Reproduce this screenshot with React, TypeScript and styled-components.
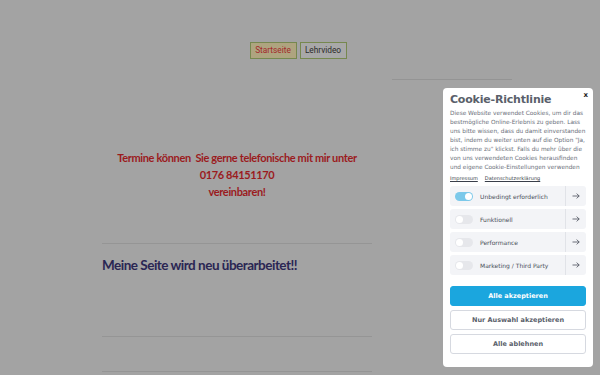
import styled, { createGlobalStyle } from 'styled-components';

const GlobalStyle = createGlobalStyle`
    html, body {
        margin: 0;
        padding: 0;
        background: #a3a3a3;
        font-family: 'DejaVu Sans', sans-serif;
    }
`;

const Page = styled.div`
    width: 600px;
    height: 375px;
    overflow: hidden;
    position: relative;
`;

const Nav = styled.nav`
    display: flex;
    justify-content: center;
    gap: 3px;
    padding: 42px 4px 0 0;
`;

const NavButton = styled.a<{ $active?: boolean }>`
    display: block;
    box-sizing: border-box;
    width: 47px;
    height: 17px;
    text-align: center;
    border: 1.5px solid #76884f;
    background: ${(p) => (p.$active ? '#aea47f' : '#a8a8a8')};
    color: ${(p) => (p.$active ? '#a3282a' : '#2a2a2a')};
    font-family: Roboto, sans-serif;
    font-size: 8.3px;
    line-height: 14px;
    text-decoration: none;
`;

const Columns = styled.div`
    display: flex;
    padding-left: 102px;
    gap: 20px;
`;

const Main = styled.main`
    width: 270px;
`;

const Sidebar = styled.aside`
    width: 120px;
    margin-top: 20px;
    border-top: 1px solid #949494;
    height: 0;
`;

const Notice = styled.p`
    margin: 90px 0 0;
    text-align: center;
    color: #9b1b1e;
    font-family: Lato, sans-serif;
    font-weight: 700;
    font-size: 11px;
    line-height: 17px;
    letter-spacing: -0.35px;
`;

const Rule = styled.hr<{ $gap: number }>`
    margin: ${(p) => p.$gap}px 0 0;
    border: 0;
    border-top: 1px solid #959595;
`;

const Heading = styled.h2`
    margin: 12px 0 0;
    color: #2a2653;
    font-family: Lato, sans-serif;
    font-weight: 700;
    font-size: 13.5px;
    line-height: 18px;
    letter-spacing: -0.5px;
`;

const Modal = styled.div`
    position: absolute;
    top: 88px;
    left: 443px;
    width: 150px;
    height: 279px;
    box-sizing: border-box;
    background: #fff;
    border-radius: 4px;
    padding: 5px 7px 0;
    color: #5c6270;
`;

const Close = styled.span`
    position: absolute;
    top: 3px;
    right: 5px;
    font-size: 7px;
    font-weight: 700;
    color: #222;
`;

const Title = styled.h3`
    margin: 0;
    font-size: 11px;
    line-height: 14px;
    font-weight: 700;
    color: #5a5f6b;
    letter-spacing: -0.2px;
`;

const Body = styled.p`
    margin: 2px 0 0;
    font-size: 5.8px;
    line-height: 9px;
    color: #6a6f7a;
    white-space: nowrap;
`;

const Links = styled.div`
    display: flex;
    gap: 7px;
    margin-top: 2px;
    font-size: 5px;
    line-height: 8px;
    a {
        color: #3a3f4a;
        text-decoration: underline;
    }
`;

const Options = styled.div`
    display: flex;
    flex-direction: column;
    gap: 3px;
    margin-top: 4px;
`;

const Option = styled.div`
    display: flex;
    align-items: center;
    height: 20px;
    background: #f3f4f7;
    border-radius: 3px;
`;

const Toggle = styled.span<{ $on?: boolean }>`
    position: relative;
    width: 18px;
    height: 9px;
    margin: 0 7px 0 5px;
    border-radius: 5px;
    background: ${(p) => (p.$on ? '#7cc9ea' : '#e6e7eb')};
    &::after {
        content: '';
        position: absolute;
        top: 1px;
        ${(p) => (p.$on ? 'right: 1px;' : 'left: 1px;')}
        width: 7px;
        height: 7px;
        border-radius: 50%;
        background: #fff;
    }
`;

const OptionLabel = styled.span`
    flex: 1;
    font-size: 6px;
    color: #4a4f5a;
`;

const Arrow = styled.span`
    display: flex;
    align-items: center;
    justify-content: center;
    width: 20px;
    height: 100%;
    border-left: 1px solid #e1e3e8;
    color: #4a4f5a;
`;

const Actions = styled.div`
    display: flex;
    flex-direction: column;
    gap: 4px;
    margin-top: 11px;
`;

const Button = styled.button<{ $primary?: boolean }>`
    height: 20px;
    border-radius: 3px;
    border: 1px solid ${(p) => (p.$primary ? '#1ba6de' : '#d6d9e0')};
    background: ${(p) => (p.$primary ? '#1ba6de' : '#fff')};
    color: ${(p) => (p.$primary ? '#fff' : '#5a5f6b')};
    font-family: 'DejaVu Sans', sans-serif;
    font-weight: 700;
    font-size: 6.5px;
    padding: 0;
`;

const options = [
    { label: 'Unbedingt erforderlich', on: true },
    { label: 'Funktionell', on: false },
    { label: 'Performance', on: false },
    { label: 'Marketing / Third Party', on: false },
];

const bodyLines = [
    'Diese Website verwendet Cookies, um dir das',
    'bestmögliche Online-Erlebnis zu geben. Lass',
    'uns bitte wissen, dass du damit einverstanden',
    'bist, indem du weiter unten auf die Option "Ja,',
    'ich stimme zu" klickst. Falls du mehr über die',
    'von uns verwendeten Cookies herausfinden',
    'und eigene Cookie-Einstellungen verwenden',
];

const ArrowIcon = () => (
    <svg width="8" height="6" viewBox="0 0 8 6" fill="none" stroke="currentColor" strokeWidth="0.8">
        <path d="M0.5 3H7.2M4.6 0.6L7.2 3L4.6 5.4" />
    </svg>
);

export default function App() {
    return (
        <Page>
            <GlobalStyle />
            <Nav>
                <NavButton $active>Startseite</NavButton>
                <NavButton>Lehrvideo</NavButton>
            </Nav>
            <Columns>
                <Main>
                    <Notice>
                        Termine können&nbsp; Sie gerne telefonische mit mir unter
                        <br />
                        0176 84151170
                        <br />
                        vereinbaren!
                    </Notice>
                    <Rule $gap={43} />
                    <Heading>Meine Seite wird neu überarbeitet!!</Heading>
                    <Rule $gap={62} />
                    <Rule $gap={34} />
                </Main>
                <Sidebar />
            </Columns>
            <Modal>
                <Close>x</Close>
                <Title>Cookie-Richtlinie</Title>
                <Body>
                    {bodyLines.map((line, i) => (
                        <span key={i}>
                            {line}
                            <br />
                        </span>
                    ))}
                </Body>
                <Links>
                    <a>Impressum</a>
                    <a>Datenschutzerklärung</a>
                </Links>
                <Options>
                    {options.map((o) => (
                        <Option key={o.label}>
                            <Toggle $on={o.on} />
                            <OptionLabel>{o.label}</OptionLabel>
                            <Arrow>
                                <ArrowIcon />
                            </Arrow>
                        </Option>
                    ))}
                </Options>
                <Actions>
                    <Button $primary>Alle akzeptieren</Button>
                    <Button>Nur Auswahl akzeptieren</Button>
                    <Button>Alle ablehnen</Button>
                </Actions>
            </Modal>
        </Page>
    );
}
